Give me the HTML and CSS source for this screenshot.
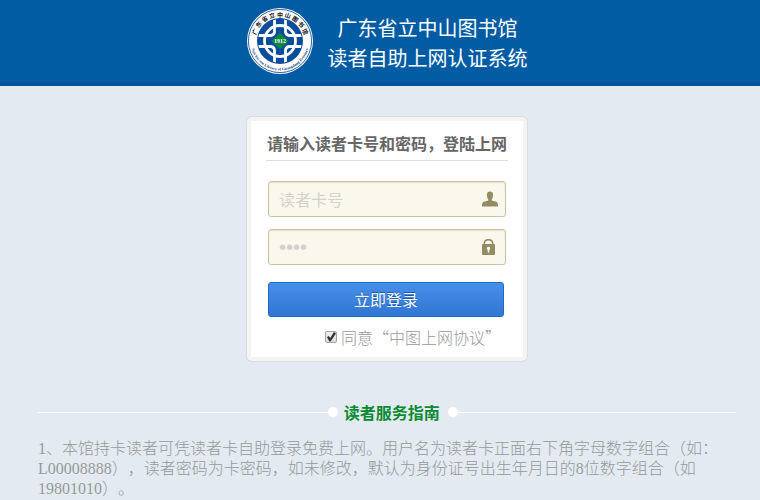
FILE: index.html
```html
<!DOCTYPE html>
<html lang="zh-CN">
<head>
    <meta charset="UTF-8">
    <meta name="viewport" content="width=device-width, initial-scale=1.0">
    <title>读者自助上网认证系统</title>
    <link rel="stylesheet" href="styles.css">
</head>
<body>
    <header class="header">
        <svg class="logo" viewBox="0 0 66 66" role="img" aria-label="广东省立中山图书馆">
            <defs>
                <path id="arc-top" d="M9.2 39.4A24.6 24.6 0 1 1 56.8 39.4"/>
                <path id="arc-bottom" d="M3.6 33A29.4 29.4 0 0 0 62.4 33"/>
                <clipPath id="disc"><circle cx="33" cy="33" r="22"/></clipPath>
            </defs>
            <circle cx="33" cy="33" r="33" fill="#fff"/>
            <circle cx="33" cy="33" r="31.6" fill="none" stroke="#16519a" stroke-width="0.9"/>
            <text class="logo-cn"><textPath href="#arc-top" startOffset="50%" text-anchor="middle">广 东 省 立 中 山 图 书 馆</textPath></text>
            <text class="logo-en"><textPath href="#arc-bottom" startOffset="50%" text-anchor="middle">Sun Yat-sen Library of Guangdong Province</textPath></text>
            <circle cx="33" cy="33" r="23" fill="#0c4c9c"/>
            <g clip-path="url(#disc)" fill="none" stroke="#fff" stroke-width="2.8">
                <circle cx="33" cy="33" r="15.5"/>
                <path d="M27.5 11V24Q27 27 24 27.5H11M38.5 11V24Q39 27 42 27.5H55M27.5 55V42Q27 39 24 38.5H11M38.5 55V42Q39 39 42 38.5H55"/>
            </g>
            <path d="M33 25L41.5 33L33 41L24.5 33Z" fill="#0a8a3e"/>
            <text class="logo-year" x="33" y="35" text-anchor="middle">1912</text>
        </svg>
        <h1 class="site-name">广东省立中山图书馆<br>读者自助上网认证系统</h1>
    </header>
    <main class="content">
        <form class="login">
            <h2 class="login-title">请输入读者卡号和密码，登陆上网</h2>
            <div class="field">
                <input class="text-input" type="text" placeholder="读者卡号" aria-label="读者卡号">
                <svg class="field-icon" viewBox="0 0 16 16" aria-hidden="true">
                    <path d="M8 0.5C5.8 0.5 4.7 2 4.9 4.2C5 6.3 5.6 7.6 6.3 8.3V9.4L1.8 10.8C0.4 11.4 0 12.4 0 15.5H16C16 12.4 15.6 11.4 14.2 10.8L9.7 9.4V8.3C10.4 7.6 11 6.3 11.1 4.2C11.3 2 10.2 0.5 8 0.5Z" fill="#938b61"/>
                </svg>
            </div>
            <div class="field">
                <input class="text-input password" type="password" value="0000" aria-label="密码">
                <svg class="field-icon" viewBox="0 0 16 16" aria-hidden="true">
                    <path d="M2.3 6V4.6C2.3 2 4 0.7 6.5 0.7S10.7 2 10.7 4.6V6" fill="none" stroke="#938b61" stroke-width="1.5"/>
                    <rect x="0" y="5" width="13" height="11" rx="1" fill="#938b61"/>
                    <path d="M6.5 7.8A1.7 1.7 0 0 0 5.7 11V13.4H7.3V11A1.7 1.7 0 0 0 6.5 7.8Z" fill="#faf7ed"/>
                </svg>
            </div>
            <button class="submit" type="button">立即登录</button>
            <div class="agree">
                <input class="agree-box" type="checkbox" id="agree" checked>
                <label for="agree">同意“中图上网协议”</label>
            </div>
        </form>
        <section class="guide">
            <div class="guide-head">
                <span class="line line-left"></span>
                <span class="dot"></span>
                <h2 class="guide-title">读者服务指南</h2>
                <span class="dot"></span>
                <span class="line line-right"></span>
            </div>
            <p class="guide-text">1、本馆持卡读者可凭读者卡自助登录免费上网。用户名为读者卡正面右下角字母数字组合（如：L00008888），读者密码为卡密码，如未修改，默认为身份证号出生年月日的8位数字组合（如19801010）。</p>
        </section>
    </main>
</body>
</html>
```
FILE: styles.css
```css
* {
    box-sizing: border-box;
}
body {
    margin: 0;
    background-color: #e3eaf1;
    font-family: "Noto Sans CJK SC", sans-serif;
    font-size: 16px;
    color: #999;
    text-spacing-trim: space-all;
}
h1, h2, p {
    margin: 0;
}

/* Header */
.header {
    display: flex;
    justify-content: center;
    align-items: flex-start;
    gap: 15px;
    height: 86px;
    padding: 8px 24px 0 38px;
    background-color: #015ca4;
    border-bottom: 4px solid #01539a;
}
.logo {
    width: 66px;
    height: 66px;
}
.logo-cn {
    font-size: 6px;
    font-weight: bold;
    fill: #111;
}
.logo-en {
    font-family: "Liberation Serif", serif;
    font-size: 4px;
    font-weight: bold;
    fill: #16427c;
}
.logo-year {
    font-family: "Liberation Serif", serif;
    font-size: 6px;
    font-weight: bold;
    fill: #fff;
}
.site-name {
    padding-top: 5px;
    font-size: 20px;
    line-height: 30px;
    font-weight: normal;
    text-align: center;
    color: #fff;
}

/* Login box */
.content {
    padding: 31px 24px 0 38px;
}
.login {
    width: 280px;
    margin: 0 auto;
    padding: 7px 15px 8px;
    background-color: #fff;
    border: 4px solid #f4f4f4;
    border-radius: 5px;
    box-shadow: 0 0 0 1px #dcdcd8;
}
.login-title {
    height: 33px;
    margin-bottom: 20px;
    border-bottom: 1px solid #dedede;
    font-size: 16px;
    line-height: 30px;
    white-space: nowrap;
    text-align: center;
    color: #666;
}
.field {
    position: relative;
    margin: 0 2px 12px;
}
.text-input {
    display: block;
    width: 100%;
    height: 36px;
    padding: 0 36px 0 10px;
    background-color: #faf7ed;
    border: 1px solid #c9c5a3;
    border-radius: 3px;
    box-shadow: inset 0 1px 1px #e4e0c8;
    font-family: inherit;
    font-size: 16px;
    color: #d4d2cc;
}
.text-input::placeholder {
    color: #d4d2cc;
}
.password {
    font-family: "Liberation Sans", sans-serif;
    font-size: 20px;
}
.field-icon {
    position: absolute;
    top: 10px;
    right: 8px;
    width: 16px;
    height: 16px;
}
.submit {
    display: block;
    width: calc(100% - 6px);
    height: 35px;
    margin: 17px 2px 0;
    padding: 0 0 2px;
    background: linear-gradient(#4790e9, #3076d3);
    border: 1px solid #1f69c6;
    border-radius: 3px;
    font-family: inherit;
    font-size: 16px;
    color: #fff;
    text-shadow: 0 -1px 0 #1c57a5;
}
.agree {
    display: flex;
    justify-content: flex-end;
    align-items: center;
    margin-top: 8px;
    padding-right: 7px;
    line-height: 24px;
    font-weight: 300;
}
.agree-box {
    appearance: none;
    width: 12px;
    height: 12px;
    margin: 0 4px 0 0;
    border: 1px solid #a5a5a5;
    border-radius: 2px;
    background: linear-gradient(#eee, #ddd);
}
.agree-box:checked::before {
    content: "";
    display: block;
    width: 10px;
    height: 10px;
    background-color: #333;
    clip-path: polygon(10% 50%, 28% 40%, 42% 60%, 80% 0, 100% 16%, 46% 95%, 34% 95%);
}

/* Reader guide */
.guide {
    padding-top: 39px;
}
.guide-head {
    display: flex;
    align-items: center;
}
.line {
    height: 1px;
    background-color: #fff;
}
.line-left {
    flex: 25;
}
.line-right {
    flex: 24;
}
.dot {
    width: 10px;
    height: 10px;
    border-radius: 50%;
    background-color: #fff;
}
.guide-title {
    padding: 0 8px 0 6px;
    font-size: 16px;
    line-height: 24px;
    color: #0b8a33;
}
.guide-text {
    margin-top: 15px;
    font-family: "Liberation Serif", "Noto Sans CJK SC", serif;
    font-weight: 300;
    line-height: 20px;
}
```
